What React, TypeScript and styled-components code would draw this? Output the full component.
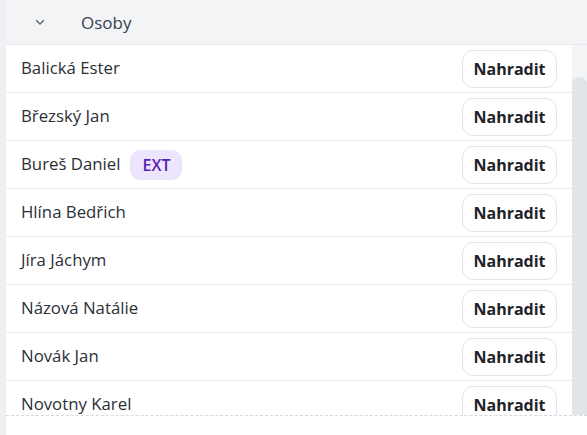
import React from "react";
import styled, { createGlobalStyle } from "styled-components";

const GlobalStyle = createGlobalStyle`
  html, body {
    margin: 0;
    padding: 0;
    background: #ffffff;
  }
  body {
    font-family: "Open Sans", "Noto Sans", sans-serif;
  }
`;

const Page = styled.div`
  display: flex;
  width: 587px;
  height: 435px;
  overflow: hidden;
`;

const Strip = styled.div`
  width: 6px;
  flex: none;
  background: #eef0f3;
`;

const Main = styled.div`
  flex: 1;
  display: flex;
  flex-direction: column;
  min-width: 0;
`;

const Header = styled.div`
  height: 44px;
  flex: none;
  display: flex;
  align-items: center;
  background: #f3f4f6;
  border-bottom: 1px solid #e7e9ec;
  padding-left: 28px;
  gap: 35px;
  color: #374151;
  font-size: 17px;
`;

const Body = styled.div`
  height: 370px;
  flex: none;
  display: flex;
  border-bottom: 1px dashed #d6d9de;
`;

const List = styled.div`
  flex: 1;
  overflow: hidden;
  background: #ffffff;
`;

const Row = styled.div`
  height: 47px;
  display: flex;
  align-items: center;
  padding: 0 15px;
  gap: 10px;
  border-bottom: 1px solid #e9ebee;
  color: #2b2f36;
  font-size: 16.8px;
`;

const Name = styled.span`
  white-space: nowrap;
  margin-top: -2px;
`;

const Badge = styled.span`
  display: inline-flex;
  align-items: center;
  justify-content: center;
  height: 30px;
  width: 52px;
  border-radius: 10px;
  background: #ede5fd;
  color: #5a22b0;
  font-weight: 600;
  font-size: 16px;
`;

const ReplaceButton = styled.button`
  margin-left: auto;
  height: 38px;
  width: 95px;
  border: 1px solid #e3e5e8;
  border-radius: 11px;
  background: #ffffff;
  color: #1f2329;
  font-family: "Open Sans", "Noto Sans", sans-serif;
  font-weight: 700;
  font-size: 16px;
  padding: 0;
`;

const Track = styled.div`
  width: 15px;
  flex: none;
  background: #f3f4f6;
  padding-top: 32px;
  display: flex;
`;

const Thumb = styled.div`
  flex: 1;
  background: #e1e4e8;
  border-radius: 8px 8px 0 0;
`;

const Footer = styled.div`
  flex: 1;
  background: #ffffff;
`;

const people: { name: string; ext?: boolean }[] = [
  { name: "Balická Ester" },
  { name: "Březský Jan" },
  { name: "Bureš Daniel", ext: true },
  { name: "Hlína Bedřich" },
  { name: "Jíra Jáchym" },
  { name: "Názová Natálie" },
  { name: "Novák Jan" },
  { name: "Novotny Karel" },
];

function Chevron() {
  return (
    <svg width="12" height="12" viewBox="0 0 12 12" fill="none">
      <path
        d="M2.5 4.5 L6 8 L9.5 4.5"
        stroke="#6b7280"
        strokeWidth="1.6"
        strokeLinecap="round"
        strokeLinejoin="round"
      />
    </svg>
  );
}

export default function App() {
  return (
    <>
      <GlobalStyle />
      <Page>
        <Strip />
        <Main>
          <Header>
            <Chevron />
            <span>Osoby</span>
          </Header>
          <Body>
            <List>
              {people.map((p) => (
                <Row key={p.name}>
                  <Name>{p.name}</Name>
                  {p.ext && <Badge>EXT</Badge>}
                  <ReplaceButton>Nahradit</ReplaceButton>
                </Row>
              ))}
            </List>
            <Track>
              <Thumb />
            </Track>
          </Body>
          <Footer />
        </Main>
      </Page>
    </>
  );
}
